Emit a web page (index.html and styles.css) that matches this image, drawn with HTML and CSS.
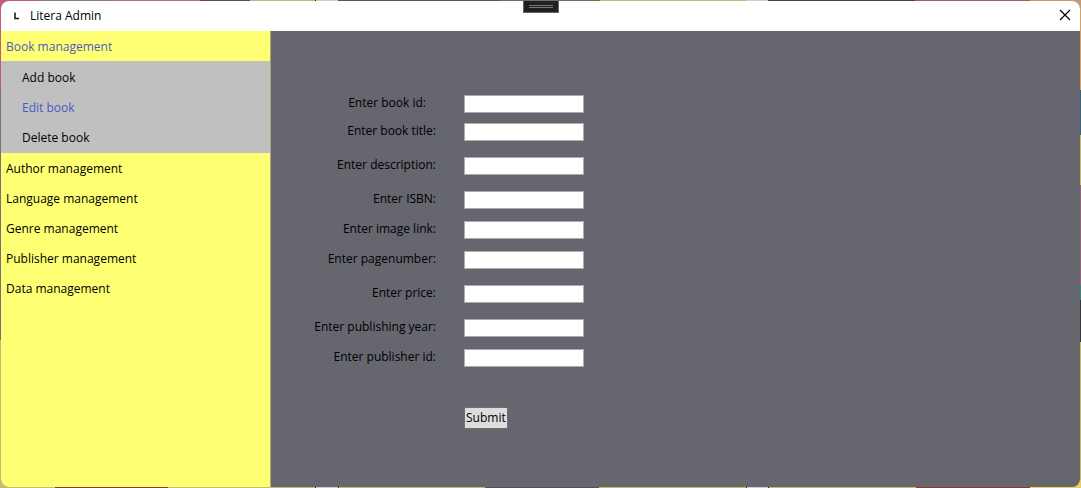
FILE: index.html
```html
<!DOCTYPE html>
<html lang="en">
<head>
<meta charset="utf-8">
<title>Litera Admin</title>
<link rel="stylesheet" href="styles.css">
</head>
<body>
<div class="window">
  <header class="titlebar">
    <svg class="logo" width="6" height="8" viewBox="0 0 6 8" aria-hidden="true"><path d="M1 0.5V6.5H5" fill="none" stroke="#111" stroke-width="1.5"/></svg>
    <h1 class="title">Litera Admin</h1>
    <button class="close" type="button" aria-label="Close">
      <svg width="12" height="12" viewBox="0 0 12 12"><path d="M1 1L11 11M11 1L1 11" fill="none" stroke="#000" stroke-width="1.2"/></svg>
    </button>
  </header>
  <div class="body">
    <nav class="sidebar">
      <a class="item active" href="#book">Book management</a>
      <div class="submenu">
        <a class="item" href="#add">Add book</a>
        <a class="item active" href="#edit">Edit book</a>
        <a class="item" href="#delete">Delete book</a>
      </div>
      <a class="item" href="#author">Author management</a>
      <a class="item" href="#language">Language management</a>
      <a class="item" href="#genre">Genre management</a>
      <a class="item" href="#publisher">Publisher management</a>
      <a class="item" href="#data">Data management</a>
    </nav>
    <main class="content">
      <form class="form">
        <div class="group tight">
          <div class="row short"><label for="id">Enter book id:</label><input id="id" type="text"></div>
          <div class="row"><label for="title">Enter book title:</label><input id="title" type="text"></div>
        </div>
        <div class="group">
          <div class="row"><label for="description">Enter description:</label><input id="description" type="text"></div>
        </div>
        <div class="group">
          <div class="row"><label for="isbn">Enter ISBN:</label><input id="isbn" type="text"></div>
          <div class="row"><label for="image">Enter image link:</label><input id="image" type="text"></div>
          <div class="row"><label for="pages">Enter pagenumber:</label><input id="pages" type="text"></div>
        </div>
        <div class="group">
          <div class="row"><label for="price">Enter price:</label><input id="price" type="text"></div>
        </div>
        <div class="group">
          <div class="row"><label for="year">Enter publishing year:</label><input id="year" type="text"></div>
          <div class="row"><label for="pubid">Enter publisher id:</label><input id="pubid" type="text"></div>
        </div>
        <button class="submit" type="button">Submit</button>
      </form>
    </main>
  </div>
  <div class="grip" aria-hidden="true"><span></span><span></span></div>
</div>
</body>
</html>
```
FILE: styles.css
```css
* {
  box-sizing: border-box;
}

body {
  margin: 0;
  min-height: 100vh;
  padding: 1px;
  display: flex;
  font: 12px/16px "Open Sans", "Noto Sans", sans-serif;
  color: #000;
  background:
    linear-gradient(90deg, #c4bd70 0 55px, #8f3838 55px 168px, #c4bd70 168px 315px, #222 315px 316px, #cfcbd8 316px 338px, #222 338px 339px, #c4bd70 339px 485px, #55505c 485px 599px, #c4bd70 599px 746px, #222 746px 747px, #cfcbd8 747px 768px, #222 768px 769px, #c4bd70 769px 916px, #8f3838 916px 1030px, #e6cf65 1030px) bottom / 100% 8px no-repeat,
    linear-gradient(90deg, #c05a86 0 40px, #8d7b86 40px 110px, #b9688c 110px 200px, #5d4a58 200px 250px, #c4b87a 250px 315px, #222 315px 316px, #cfcbd8 316px 338px, #5d5358 338px 500px, #7b6a60 500px 600px, #c4b87a 600px 746px, #cfcbd8 746px 768px, #46424a 768px 915px, #9a5f68 915px 1030px, #c79b6c 1030px) top / 100% 8px no-repeat,
    linear-gradient(#c05a86 0 90px, #77707f 90px 340px, #c4bd70 340px) left / 8px 100% no-repeat,
    linear-gradient(#d8a264 0 90px, #3b6377 90px 135px, #c4bd70 135px 185px, #8d6576 185px 285px, #3f8078 285px 300px, #38383c 300px 342px, #c4bd70 342px) right / 8px 100% no-repeat;
}

.window {
  position: relative;
  flex: 1;
  display: flex;
  flex-direction: column;
  overflow: hidden;
  border-radius: 8px;
  background: #66666f;
}

.titlebar {
  display: flex;
  align-items: center;
  height: 30px;
  padding: 0 9px 0 13px;
  background: #fff;
}

.title {
  margin: 0 auto 0 10px;
  font-size: 12px;
  font-weight: 400;
}

.close {
  display: flex;
  padding: 0 0 2px;
  border: 0;
  background: none;
}

.body {
  flex: 1;
  display: flex;
}

.sidebar {
  width: 270px;
  border-right: 1px solid #a8a77c;
  background: #ffff74;
}

.item {
  display: block;
  padding: 8px 5px 6px;
  color: #000;
  text-decoration: none;
}

.item.active {
  color: #4d5bbf;
}

.submenu {
  padding: 1px 16px;
  background: #c0c0c0;
}

.content {
  flex: 1;
  padding: 64px 0 48px 28px;
}

.form {
  display: flex;
  flex-direction: column;
  gap: 16px;
}

.group {
  display: flex;
  flex-direction: column;
  gap: 12px;
}

.tight {
  gap: 10px;
}

.row {
  display: flex;
  gap: 28px;
}

.row label {
  width: 137px;
  text-align: right;
}

.row.short label {
  padding-right: 10px;
}

.row input {
  width: 120px;
  height: 18px;
  padding: 0 2px;
  border: 1px solid #abadb3;
  background: #fff;
  font: inherit;
}

.submit {
  align-self: flex-start;
  margin: 24px 0 0 165px;
  padding: 2px 1px;
  border: 1px solid #707070;
  background: #ddd;
  color: #000;
  font: inherit;
}

.grip {
  position: absolute;
  top: -1px;
  left: 50%;
  transform: translateX(-50%);
  display: flex;
  flex-direction: column;
  align-items: center;
  gap: 1px;
  width: 36px;
  padding: 4px 0;
  border: 1px solid #66666a;
  background: #202020;
}

.grip span {
  width: 24px;
  height: 1px;
  background: #777;
}
```
